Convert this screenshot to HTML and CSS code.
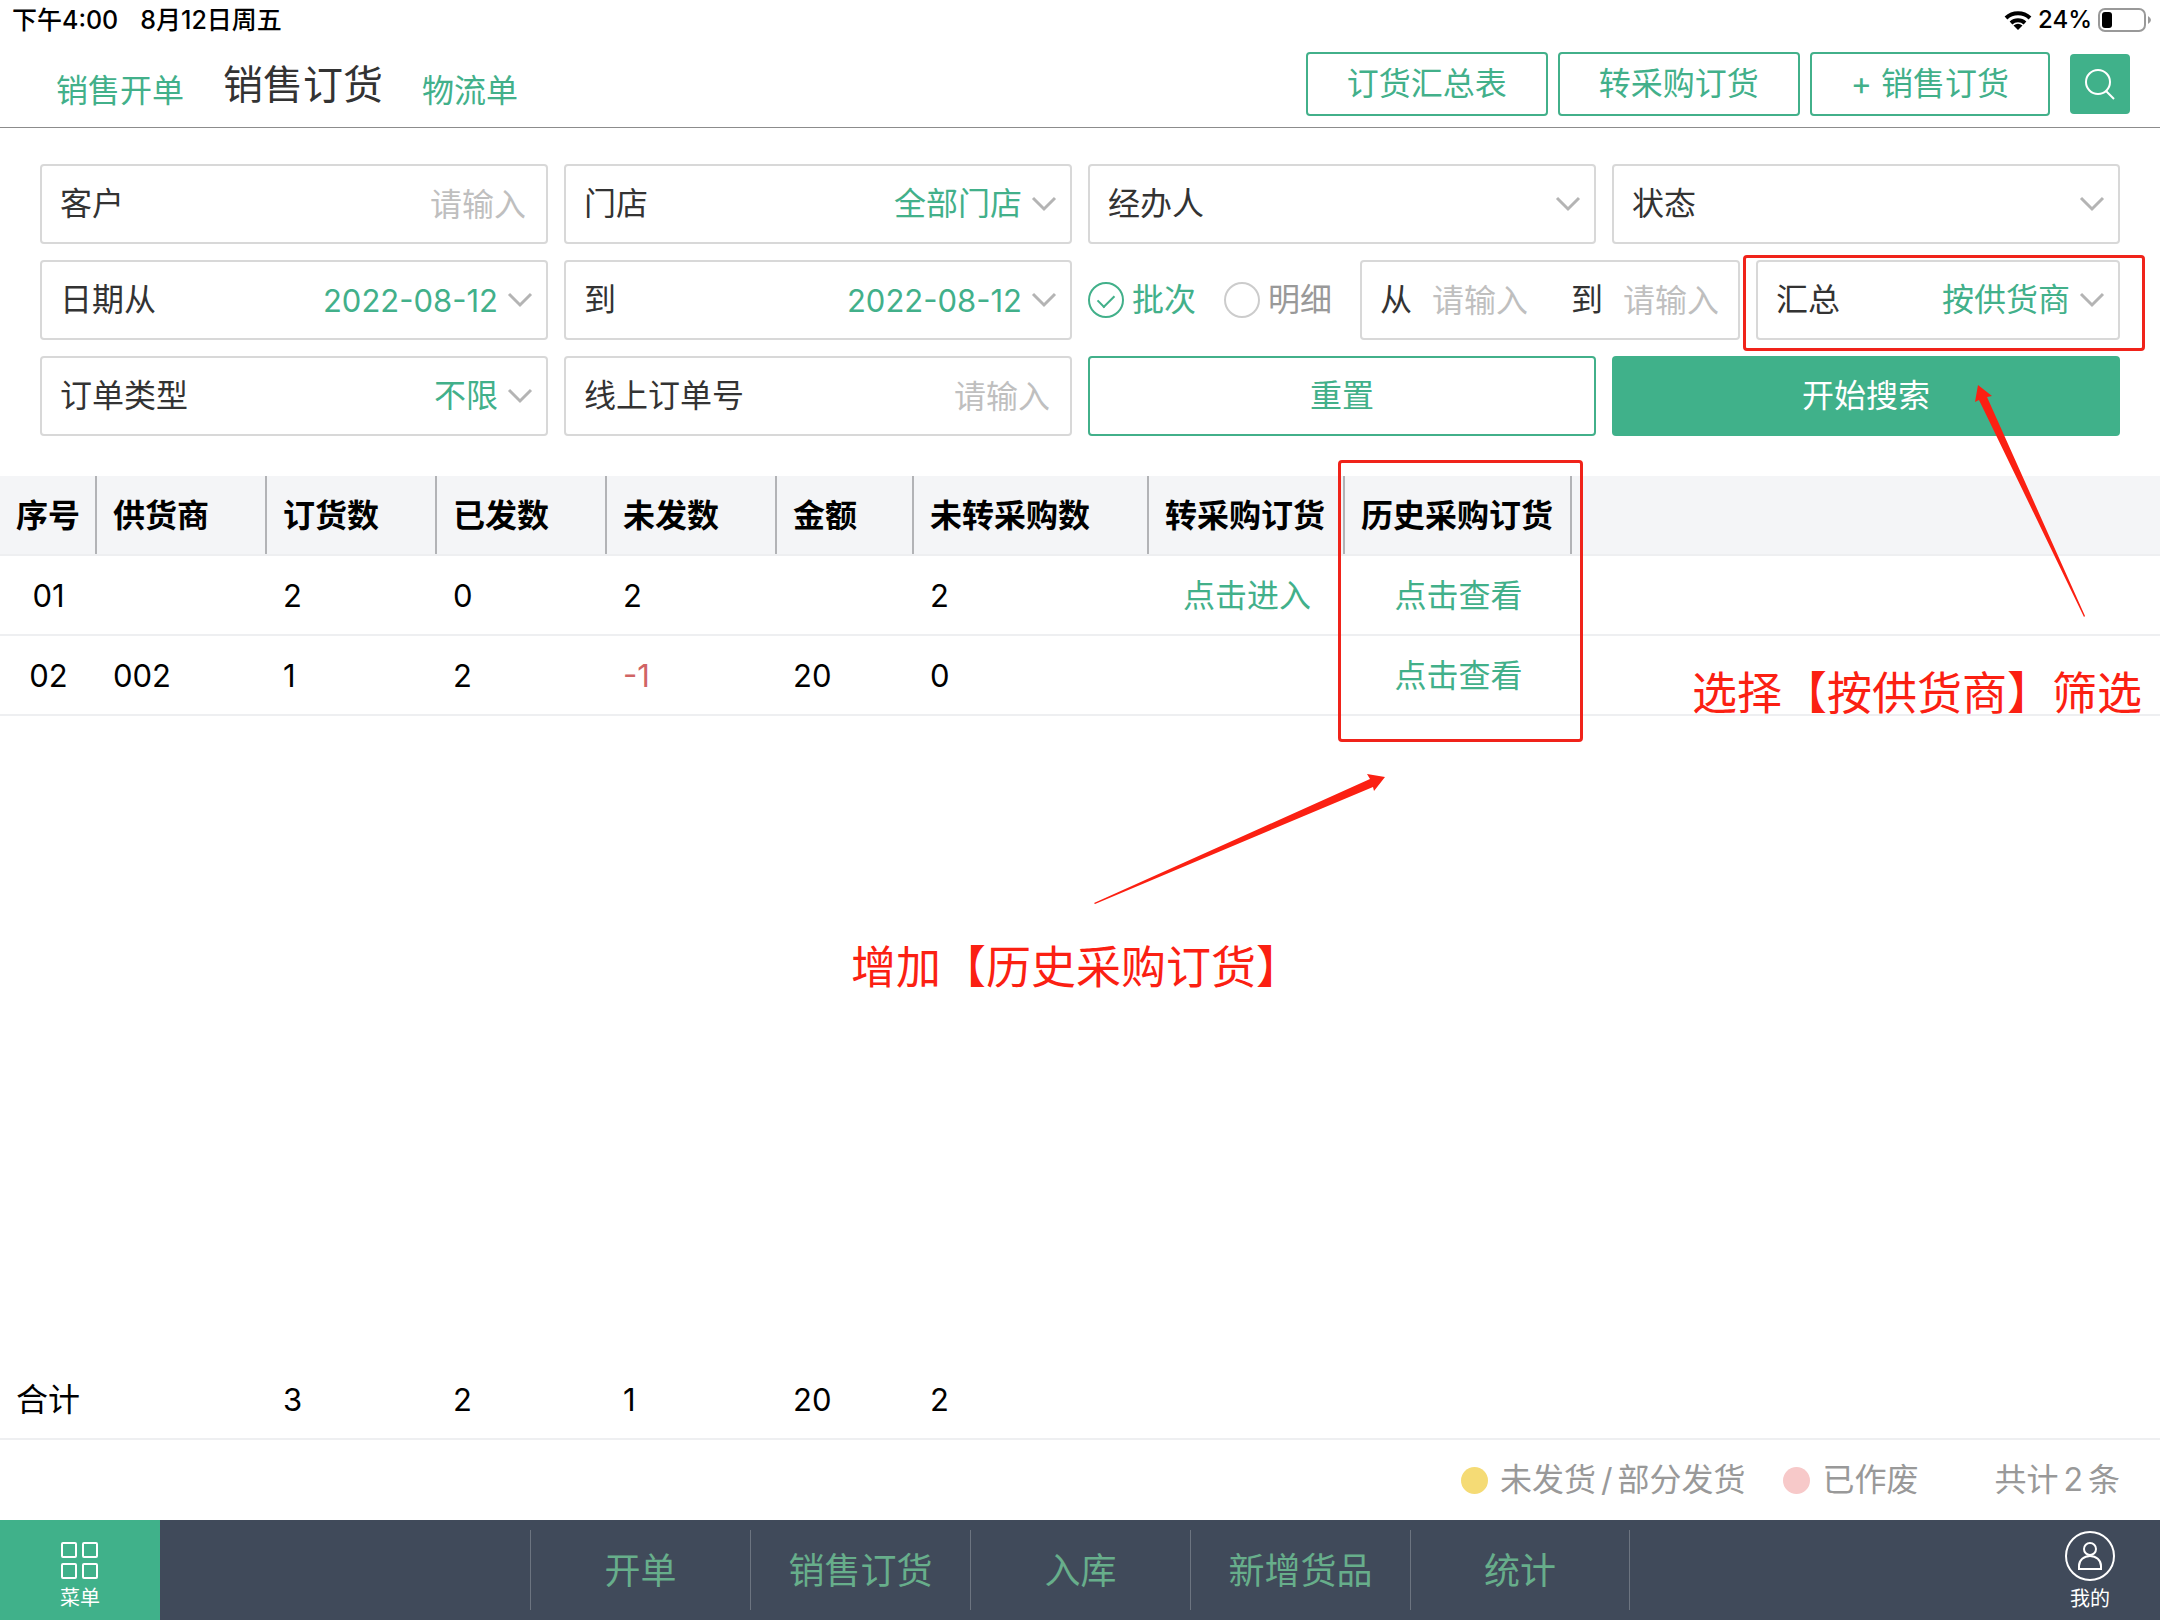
FILE: index.html
```html
<!DOCTYPE html>
<html lang="zh-CN">
<head>
<meta charset="utf-8">
<meta name="viewport" content="width=device-width, initial-scale=1">
<title>销售订货</title>
<link rel="stylesheet" href="styles.css">
</head>
<body>
<svg class="symbols" aria-hidden="true">
  <symbol id="chevron" viewBox="0 0 26 16"><path d="M2 2l11 11L24 2" fill="none" stroke="#b4b4b4" stroke-width="3"/></symbol>
</svg>
<div class="page">
  <div class="status-bar">
    <div class="status-left"><span>下午4:00</span><span>8月12日周五</span></div>
    <div class="status-right">
      <svg class="wifi" viewBox="0 0 28 20" aria-hidden="true">
        <path d="M2 8A17.500 17.500 0 0 1 26 8" fill="none" stroke="#000" stroke-width="4"/>
        <path d="M7 13A10.500 10.500 0 0 1 21 13" fill="none" stroke="#000" stroke-width="4"/>
        <path d="M14 20L9.500 15.500Q14 12 18.500 15.500Z"/>
      </svg>
      <span>24%</span>
      <svg class="battery" viewBox="0 0 54 24" aria-hidden="true">
        <rect x="1" y="1" width="46" height="22" rx="6" fill="none" stroke="#999" stroke-width="2"/>
        <rect x="4" y="4" width="10" height="16" rx="3"/>
        <path d="M50 8Q56 12 50 16Z" fill="#999"/>
      </svg>
    </div>
  </div>

  <header class="header">
    <nav class="tabs">
      <a href="#">销售开单</a>
      <a href="#" class="current">销售订货</a>
      <a href="#">物流单</a>
    </nav>
    <div class="actions">
      <button type="button" class="outline">订货汇总表</button>
      <button type="button" class="outline">转采购订货</button>
      <button type="button" class="outline">+ 销售订货</button>
      <button type="button" class="search" aria-label="搜索">
        <svg viewBox="0 0 32 32" aria-hidden="true"><circle cx="14" cy="14" r="12"/><path d="M22 23l8 8"/></svg>
      </button>
    </div>
  </header>

  <form class="filters">
    <label class="field"><span>客户</span><input type="text" placeholder="请输入"></label>
    <label class="field"><span>门店</span><select><option>全部门店</option></select><svg><use href="#chevron"/></svg></label>
    <label class="field"><span>经办人</span><select><option></option></select><svg><use href="#chevron"/></svg></label>
    <label class="field"><span>状态</span><select><option></option></select><svg><use href="#chevron"/></svg></label>

    <label class="field"><span>日期从</span><input class="date" type="text" value="2022-08-12"><svg><use href="#chevron"/></svg></label>
    <label class="field"><span>到</span><input class="date" type="text" value="2022-08-12"><svg><use href="#chevron"/></svg></label>
    <div class="wide">
      <div class="radios">
        <label><input type="radio" name="mode" checked><span>批次</span></label>
        <label><input type="radio" name="mode"><span>明细</span></label>
      </div>
      <div class="field range">
        <label for="from">从</label><input id="from" type="text" placeholder="请输入">
        <label for="to">到</label><input id="to" type="text" placeholder="请输入">
      </div>
      <label class="field summary"><span>汇总</span><select><option>按供货商</option></select><svg><use href="#chevron"/></svg><i class="mark"></i></label>
    </div>

    <label class="field"><span>订单类型</span><select><option>不限</option></select><svg><use href="#chevron"/></svg></label>
    <label class="field"><span>线上订单号</span><input type="text" placeholder="请输入"></label>
    <button type="reset" class="outline">重置</button>
    <button type="submit" class="solid">开始搜索</button>
  </form>

  <main class="results">
    <table>
      <colgroup><col class="c-no"><col class="c-std"><col class="c-std"><col class="c-std"><col class="c-std"><col class="c-sum"><col class="c-rest"><col class="c-turn"><col class="c-past"><col></colgroup>
      <thead>
        <tr><th>序号</th><th>供货商</th><th>订货数</th><th>已发数</th><th>未发数</th><th>金额</th><th>未转采购数</th><th>转采购订货</th><th>历史采购订货</th><th></th></tr>
      </thead>
      <tbody>
        <tr><td class="center">01</td><td></td><td>2</td><td>0</td><td>2</td><td></td><td>2</td><td class="center"><a href="#">点击进入</a></td><td class="center"><a href="#">点击查看</a></td><td></td></tr>
        <tr><td class="center">02</td><td>002</td><td>1</td><td>2</td><td class="negative">-1</td><td>20</td><td>0</td><td></td><td class="center"><a href="#">点击查看</a></td><td></td></tr>
      </tbody>
    </table>
    <div class="mark history-mark"></div>
    <svg class="history-arrow" viewBox="0 0 292 130" aria-hidden="true"><path d="M291 3L273 0L276 5L0 129L1 130L279 13L280 17Z"/></svg>
    <p class="note history-note">增加【历史采购订货】</p>
  </main>

  <table class="totals">
    <colgroup><col class="c-no"><col class="c-std"><col class="c-std"><col class="c-std"><col class="c-std"><col class="c-sum"><col class="c-rest"><col class="c-turn"><col class="c-past"><col></colgroup>
    <tbody><tr><th>合计</th><td></td><td>3</td><td>2</td><td>1</td><td>20</td><td>2</td><td></td><td></td><td></td></tr></tbody>
  </table>

  <div class="legend">
    <span class="key"><i class="dot partial"></i>未发货<b>/</b>部分发货</span>
    <span class="key"><i class="dot void"></i>已作废</span>
    <span class="count">共计<b>2</b>条</span>
  </div>

  <nav class="bottom">
    <a href="#" class="menu">
      <svg viewBox="0 0 38 38" aria-hidden="true"><rect x="1" y="1" width="14" height="14" rx="1"/><rect x="22" y="1" width="14" height="14" rx="1"/><rect x="1" y="22" width="14" height="14" rx="1"/><rect x="22" y="22" width="14" height="14" rx="1"/></svg>
      菜单
    </a>
    <div class="shortcuts">
      <a href="#">开单</a><a href="#">销售订货</a><a href="#">入库</a><a href="#">新增货品</a><a href="#">统计</a>
    </div>
    <a href="#" class="mine">
      <svg viewBox="0 0 50 50" aria-hidden="true"><circle cx="25" cy="25" r="24"/><circle cx="25" cy="18" r="6"/><path d="M14 38V35C14 29 19 25 25 25S36 29 36 35V38Z"/></svg>
      我的
    </a>
  </nav>

  <svg class="supplier-arrow" viewBox="0 0 112 234" aria-hidden="true"><path d="M4 0L1 17L5 15L110 232L111 231L13 12L18 11Z"/></svg>
  <p class="note supplier-note">选择【按供货商】筛选</p>
</div>
</body>
</html>
```
FILE: styles.css
```css
* { box-sizing: border-box; }

body {
  margin: 0;
  background: #fff;
  color: #333;
  font-family: Inter, "Noto Sans CJK SC", sans-serif;
  font-size: 32px;
  line-height: 40px;
}

a { color: #42b08a; text-decoration: none; }
p { margin: 0; }
button, input, select { font: inherit; color: inherit; margin: 0; }
.symbols { position: absolute; width: 0; height: 0; }

.page {
  position: relative;
  display: flex;
  flex-direction: column;
  min-height: 100vh;
}

/* device status line */
.status-bar {
  display: flex;
  justify-content: space-between;
  height: 40px;
  padding: 0 0 0 12px;
  color: #000;
  font-size: 25px;
  font-weight: 500;
}
.status-left { display: flex; gap: 22px; }
.status-right { display: flex; align-items: center; gap: 6px; padding-right: 8px; font-size: 24px; }
.wifi { width: 28px; height: 20px; }
.battery { width: 54px; height: 24px; }

/* tabs and actions */
.header {
  display: flex;
  justify-content: space-between;
  height: 88px;
  padding: 12px 30px 0 56px;
  border-bottom: 1px solid #8c8c8c;
}
.tabs {
  display: flex;
  align-self: flex-start;
  align-items: flex-end;
  gap: 39px;
  margin-top: 3px;
  line-height: 48px;
}
.tabs .current { color: #333; font-size: 40px; line-height: 60px; }
.actions { display: flex; align-items: flex-start; gap: 10px; }
.outline {
  padding: 0 39px;
  border: 2px solid #42b08a;
  border-radius: 4px;
  background: #fff;
  color: #42b08a;
}
.actions .outline { height: 64px; }
.search {
  display: grid;
  place-items: center;
  width: 60px;
  height: 60px;
  margin: 2px 0 0 10px;
  padding: 0;
  border: 0;
  border-radius: 4px;
  background: #40b18a;
}
.search svg { width: 32px; height: 32px; fill: none; stroke: #fff; stroke-width: 2; }

/* filter form */
.filters {
  display: grid;
  grid-template-columns: repeat(4, minmax(0, 1fr));
  grid-auto-rows: 80px;
  gap: 16px;
  padding: 36px 40px 40px;
}
.field {
  position: relative;
  display: flex;
  align-items: center;
  padding: 0 13px 0 18px;
  border: 2px solid #d8d8d8;
  border-radius: 4px;
}
.field > span { flex: none; }
.field svg { flex: none; width: 26px; height: 16px; margin-left: 9px; }
.field input, .field select {
  flex: 1;
  width: 0;
  min-width: 0;
  height: 60px;
  padding: 0;
  border: 0;
  outline: 0;
  background: none;
  color: #42b08a;
  text-align: right;
  text-align-last: right;
  appearance: none;
}
.field input:last-child { margin-right: 7px; }
.field input::placeholder { color: #bfbfbf; opacity: 1; }
.field input.date { font-size: 31px; }
.wide { grid-column: span 2; display: flex; }
.radios { display: flex; flex: none; gap: 28px; width: 272px; }
.radios label { display: flex; align-items: center; gap: 8px; color: #999; }
.radios label:has(:checked) { color: #42b08a; }
.radios input {
  display: grid;
  place-items: center;
  width: 36px;
  height: 36px;
  border: 2px solid #ccc;
  border-radius: 50%;
  appearance: none;
}
.radios input:checked { border-color: #42b08a; }
.radios input:checked::before {
  content: "";
  width: 14px;
  height: 8px;
  margin-bottom: 2px;
  border: solid #42b08a;
  border-width: 0 0 2px 2px;
  transform: rotate(-45deg);
}
.range { flex: 378; gap: 20px; padding: 0 18px; }
.range input { flex: 1 1 96px; text-align: left; text-align-last: left; }
.range input:first-of-type { flex-basis: 118px; }
.range input:last-child { margin: 0; }
.summary { flex: 366; margin-left: 16px; }
.solid { border: 0; border-radius: 4px; background: #40b18a; color: #fff; }

/* result table */
.results { position: relative; flex: 1; }
table { width: 100%; border-collapse: separate; border-spacing: 0; table-layout: fixed; color: #000; }
.c-no { width: 97px; }
.c-std { width: 170px; }
.c-sum { width: 137px; }
.c-rest { width: 235px; }
.c-turn { width: 196px; }
.c-past { width: 227px; }
th, td {
  height: 80px;
  padding: 2px 0 0 16px;
  border-bottom: 2px solid #eeeff1;
  text-align: left;
  white-space: nowrap;
}
td { font-size: 31px; }
td a { font-size: 32px; }
thead th { background: linear-gradient(#b2b3b6, #b2b3b6) right / 2px 100% no-repeat #f4f5f7; }
thead th:last-child { background: #f4f5f7; }
td.center { padding: 2px 0 0; text-align: center; }
.negative { color: #d06464; }
.totals th { font-weight: 400; }

.legend {
  display: flex;
  align-items: center;
  justify-content: flex-end;
  height: 80px;
  padding-right: 40px;
  color: #999;
}
.legend b { margin: 0 5px; font-weight: 400; }
.key { display: flex; align-items: center; margin-right: 38px; }
.dot { width: 27px; height: 27px; margin-right: 12px; border-radius: 50%; }
.partial { background: #f5db75; }
.void { background: #f7c9c9; }
.count { margin-left: 38px; }

/* bottom navigation */
.bottom {
  display: flex;
  justify-content: space-between;
  height: 100px;
  background: #404a5a;
}
.menu, .mine {
  display: flex;
  flex-direction: column;
  align-items: center;
  width: 160px;
  color: #fff;
  font-size: 20px;
  line-height: 30px;
}
.menu { padding-top: 22px; background: #40b18a; }
.mine { padding: 11px 0 0 20px; }
.menu svg, .mine svg { fill: none; stroke: #fff; stroke-width: 2; }
.menu svg { width: 38px; height: 38px; margin-bottom: 3px; }
.mine svg { width: 50px; height: 50px; margin-bottom: 3px; }
.shortcuts { display: flex; padding: 10px 0; }
.shortcuts a {
  width: 220px;
  border-left: 1px solid #6c7480;
  color: #67ae8b;
  font-size: 36px;
  line-height: 82px;
  text-align: center;
}
.shortcuts a:last-child { border-right: 1px solid #6c7480; }

/* red call-outs drawn over the screen */
.mark { position: absolute; inset: -7px -27px -13px -15px; border: 3px solid #f0231a; border-radius: 4px; pointer-events: none; }
.history-mark { inset: -16px auto auto 1338px; width: 245px; height: 282px; }
.history-arrow, .supplier-arrow { position: absolute; fill: #fb2012; pointer-events: none; }
.history-arrow { left: 1094px; top: 298px; width: 292px; height: 130px; }
.supplier-arrow { right: 74px; top: 385px; width: 112px; height: 234px; }
.note { position: absolute; color: #fb2012; font-size: 45px; line-height: 60px; white-space: nowrap; }
.history-note { left: 851px; top: 462px; }
.supplier-note { right: 18px; top: 664px; }
```
